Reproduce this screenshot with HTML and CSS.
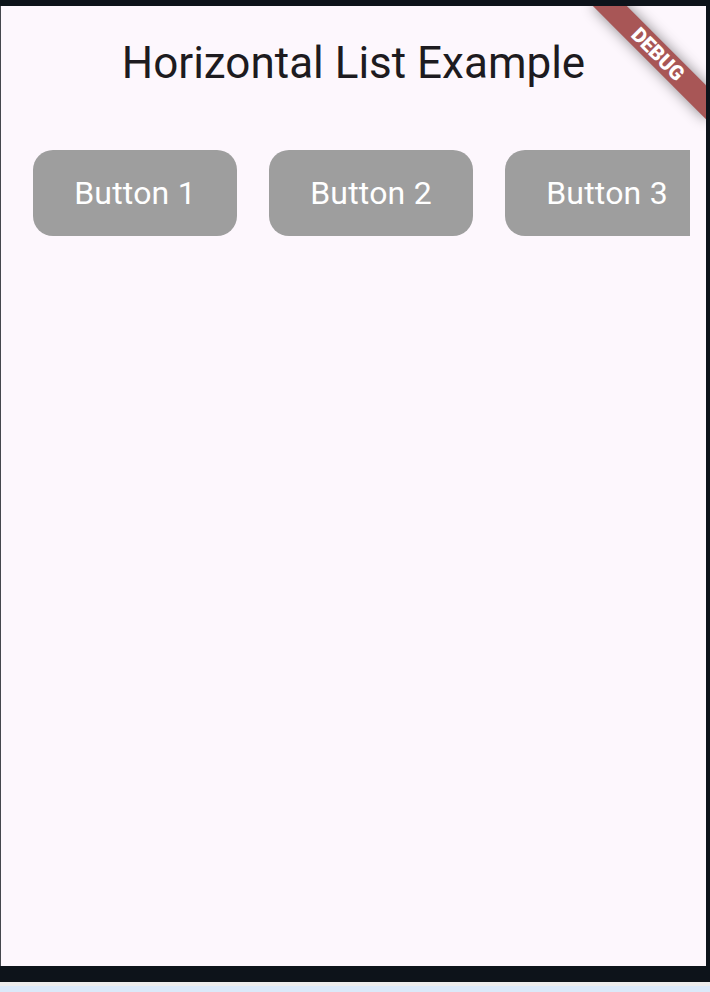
FILE: index.html
```html
<!DOCTYPE html>
<html lang="en">
<head>
<meta charset="utf-8">
<title>Horizontal List Example</title>
<link rel="stylesheet" href="styles.css">
</head>
<body>
<div class="frame">
  <div class="top-band"></div>
  <div class="app-row">
    <div class="app">
      <header class="app-bar">
        <h1 class="title">Horizontal List Example</h1>
      </header>
      <div class="list">
        <button class="item">Button 1</button>
        <button class="item">Button 2</button>
        <button class="item">Button 3</button>
      </div>
      <div class="banner-anchor">
        <div class="banner">DEBUG</div>
      </div>
    </div>
  </div>
  <div class="bottom-band"></div>
  <div class="strip-gray"></div>
  <div class="strip-blue"></div>
</div>
</body>
</html>
```
FILE: styles.css
```css
html, body {
  margin: 0;
  padding: 0;
  background: #0d131a;
}
body {
  width: 710px;
  height: 992px;
  overflow: hidden;
  font-family: Roboto, "Liberation Sans", sans-serif;
}
.frame {
  display: flex;
  flex-direction: column;
  width: 710px;
  height: 992px;
}
.top-band {
  height: 6px;
  flex-shrink: 0;
}
.app-row {
  display: flex;
  height: 960px;
  flex-shrink: 0;
}
.app {
  position: relative;
  width: 705px;
  height: 960px;
  background: #fdf7fd;
  border-left: 1px solid #45474d;
  overflow: hidden;
}
.app-bar {
  height: 112px;
  display: flex;
  align-items: center;
  justify-content: center;
}
.title {
  margin: 0;
  font-size: 44px;
  font-weight: 400;
  color: #1d1b20;
  line-height: 52px;
  padding-top: 1px;
}
.list {
  display: flex;
  gap: 32px;
  margin: 32px 16px 0 16px;
  padding-left: 16px;
  overflow: hidden;
}
.item {
  flex-shrink: 0;
  width: 204px;
  height: 86px;
  border: none;
  border-radius: 20px;
  background: #9e9e9e;
  color: #ffffff;
  font-family: Roboto, "Liberation Sans", sans-serif;
  font-size: 32px;
  font-weight: 400;
  letter-spacing: 0.2px;
  padding: 0;
}
.banner-anchor {
  position: absolute;
  top: 0;
  right: 0;
  width: 0;
  height: 0;
  transform: rotate(45deg);
}
.banner {
  position: absolute;
  left: -80px;
  top: 56px;
  width: 160px;
  height: 24px;
  background: #a85656;
  box-shadow: 0 0 14px rgba(0, 0, 0, 0.45);
  color: #ffffff;
  font-size: 20.4px;
  font-weight: 900;
  line-height: 24px;
  text-align: center;
}
.bottom-band {
  height: 16px;
  flex-shrink: 0;
}
.strip-gray {
  height: 4px;
  background: #ececec;
  flex-shrink: 0;
}
.strip-blue {
  height: 6px;
  background: #dbe9f9;
  flex-shrink: 0;
}
```
